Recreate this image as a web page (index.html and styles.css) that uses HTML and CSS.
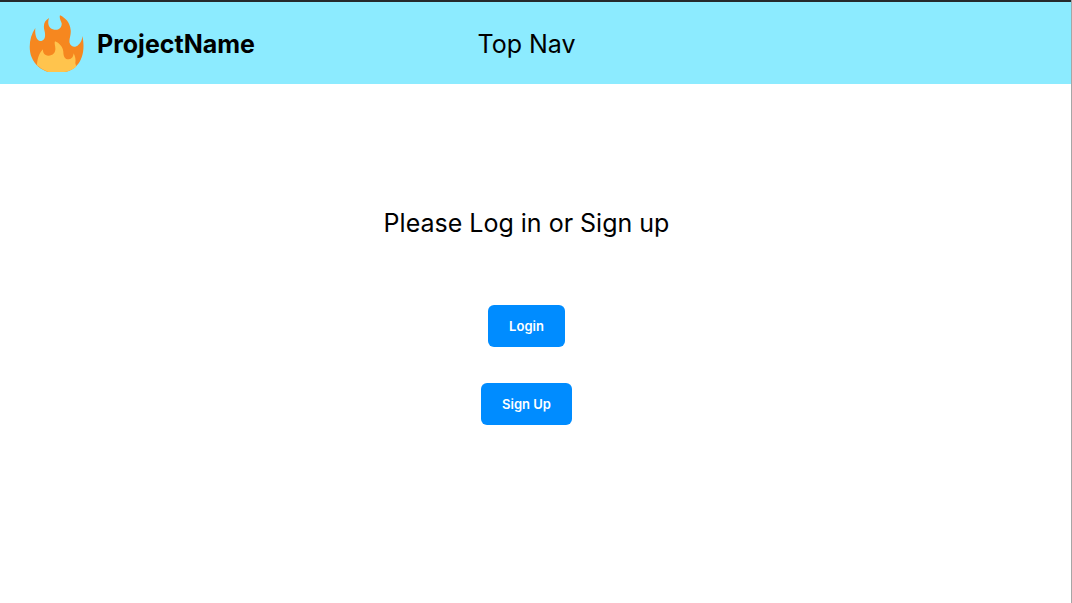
FILE: index.html
```html
<!DOCTYPE html>
<html lang="en">
<head>
<meta charset="utf-8">
<meta name="viewport" content="width=device-width, initial-scale=1">
<title>ProjectName</title>
<link rel="stylesheet" href="styles.css">
</head>
<body>
<header class="top-nav">
  <div class="brand">
    <svg class="brand-logo" viewBox="28 45 165 171" aria-hidden="true">
      <path fill="#f6871f" d="M47 84C45 104 50 122 62 123C76 122 79 108 74 90C70 73 75 62 88 54C83 68 85 86 104 89C118 91 127 82 126 70C124 62 118 54 121 46C138 54 151 68 153 90C155 105 147 118 150 129C154 141 166 144 175 136C184 128 188 118 188 108C193 128 193 155 186 172C180 190 166 207 147 213Q140 216 133 216H85C65 210 45 195 36 172C25 145 30 108 47 84Z"/>
      <path fill="#ffc44d" d="M70 148C69 158 75 167 86 167C100 167 108 158 107 145C107 136 103 130 106 124C119 129 129 140 131 155C131 170 136 178 147 178C157 177 161 170 162 160C167 170 169 180 167 190L170 200Q160 209 147 213Q140 216 133 216H85Q66 209 52 196C53 174 59 159 70 148Z"/>
    </svg>
    <span class="brand-name">ProjectName</span>
  </div>
  <span class="nav-title">Top Nav</span>
</header>
<main class="welcome">
  <h1 class="prompt">Please Log in or Sign up</h1>
  <div class="actions">
    <button class="button" type="button">Login</button>
    <button class="button" type="button">Sign Up</button>
  </div>
</main>
</body>
</html>
```
FILE: styles.css
```css
* {
  box-sizing: border-box;
}

body {
  display: flex;
  flex-direction: column;
  min-height: 100vh;
  margin: 0;
  border-right: 1px solid #a6a6a6;
  background: #fff;
  color: #000;
  font-family: Inter, sans-serif;
}

.top-nav {
  display: grid;
  grid-template-columns: 1fr auto 1fr;
  align-items: center;
  padding: 13px 18px 12px 0;
  border-top: 2px solid #262a2c;
  background: #8cebff;
  font-size: 25px;
  line-height: 32px;
}

.brand {
  display: flex;
  align-items: center;
  gap: 13px;
  padding-left: 29px;
}

.brand-logo {
  width: 55px;
  height: 57px;
}

.brand-name {
  font-weight: 700;
}

.welcome {
  display: flex;
  flex: 1;
  flex-direction: column;
  align-items: center;
  gap: 66px;
  padding: 123px 18px 24px 0;
}

.prompt {
  margin: 0;
  font-size: 25px;
  font-weight: 400;
  line-height: 32px;
}

.actions {
  display: flex;
  flex-direction: column;
  align-items: center;
  gap: 36px;
}

.button {
  padding: 12px 21px;
  border: 0;
  border-radius: 6px;
  background: #008cff;
  color: #fff;
  font-family: inherit;
  font-size: 13px;
  font-weight: 600;
  line-height: 18px;
  cursor: pointer;
}
```
